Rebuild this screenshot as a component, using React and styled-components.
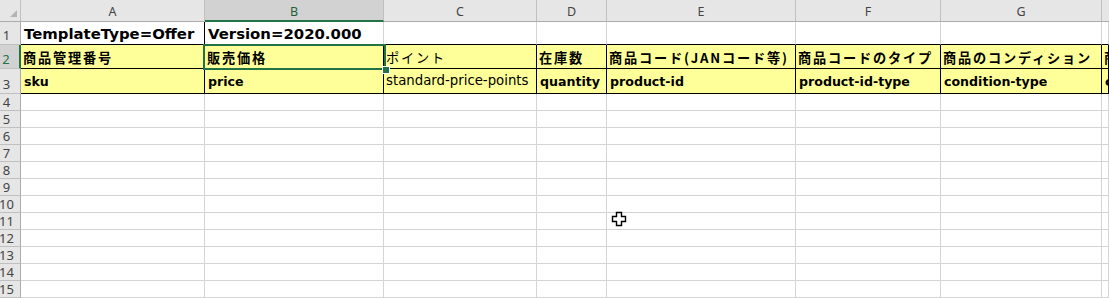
import React from "react";
import styled, { createGlobalStyle, css } from "styled-components";

const GlobalStyle = createGlobalStyle`
  html, body { margin: 0; padding: 0; background: #ffffff; overflow: hidden; }
  body { font-family: "DejaVu Sans", sans-serif; }
`;

const COLS = [
  { key: "A", w: 184 },
  { key: "B", w: 179 },
  { key: "C", w: 153 },
  { key: "D", w: 70 },
  { key: "E", w: 189 },
  { key: "F", w: 145 },
  { key: "G", w: 161 },
  { key: "H", w: 7, partial: true },
];
const ROW_H = [23, 24, 25, ...Array(12).fill(17)];

const GREEN = "#217346";
const HEAD_BG = "#e6e6e6";
const HEAD_SEL = "#d2d2d2";
const HEAD_LINE = "#c0c0c0";
const GRID = "#d4d4d4";
const YELLOW = "#ffff99";

const Sheet = styled.div`
  display: grid;
  grid-template-columns: 21px ${COLS.map((c) => c.w + "px").join(" ")};
  grid-template-rows: 22px ${ROW_H.map((h) => h + "px").join(" ")};
  width: 1109px;
  position: relative;
  overflow: hidden;
`;

const Corner = styled.div`
  box-sizing: border-box;
  background: ${HEAD_BG};
  border-right: 1px solid ${HEAD_LINE};
  border-bottom: 1px solid #ababab;
  display: flex;
  align-items: flex-end;
  justify-content: flex-end;
  padding: 0 3px 4px 0;
`;

const CornerMark = styled.div`
  width: 0;
  height: 0;
  border-left: 7px solid transparent;
  border-bottom: 7px solid #b4b4b4;
`;

const ColHeader = styled.div`
  box-sizing: border-box;
  background: ${(p) => (p.$selected ? HEAD_SEL : HEAD_BG)};
  border-right: 1px solid ${HEAD_LINE};
  border-bottom: ${(p) => (p.$selected ? `2px solid ${GREEN}` : "1px solid #ababab")};
  display: flex;
  align-items: flex-end;
  justify-content: ${(p) => (p.$partial ? "flex-start" : "center")};
  padding-bottom: ${(p) => (p.$selected ? "2px" : "3px")};
  padding-left: ${(p) => (p.$partial ? "40px" : "0")};
  font-family: "Noto Sans", "DejaVu Sans", sans-serif;
  font-size: 12.5px;
  line-height: 1;
  color: ${(p) => (p.$selected ? "#1f5f3b" : "#444444")};
  overflow: hidden;
`;

const RowHeader = styled.div`
  box-sizing: border-box;
  background: ${(p) => (p.$selected ? HEAD_SEL : HEAD_BG)};
  border-right: ${(p) => (p.$selected ? `2px solid ${GREEN}` : "1px solid #ababab")};
  border-bottom: 1px solid ${HEAD_LINE};
  display: flex;
  align-items: flex-end;
  justify-content: center;
  padding: 0 7px ${(p) => (p.$tall ? "2px" : "1px")} 0;
  font-family: "Noto Sans", "DejaVu Sans", sans-serif;
  font-size: 13px;
  line-height: 1;
  color: ${(p) => (p.$selected ? GREEN : "#444444")};
  white-space: nowrap;
`;

const Cell = styled.div`
  box-sizing: border-box;
  position: relative;
  background: ${(p) => (p.$fill ? YELLOW : "#ffffff")};
  border-right: 1px solid ${(p) => (p.$darkRight ? "#000000" : GRID)};
  border-bottom: 1px solid ${(p) => (p.$darkBottom ? "#000000" : GRID)};
  display: flex;
  align-items: flex-end;
  padding: 0 0 ${(p) => p.$pb || 0}px ${(p) => p.$pl || 3}px;
  white-space: nowrap;
  overflow: ${(p) => (p.$clip ? "hidden" : "visible")};
  color: #000000;
  line-height: 1.1;
  ${(p) =>
    p.$kind === "title" &&
    css`
      font-family: "DejaVu Sans", sans-serif;
      font-weight: 700;
      font-size: 14.9px;
    `}
  ${(p) =>
    p.$kind === "jp" &&
    css`
      font-family: "Noto Sans CJK JP", "Noto Sans", sans-serif;
      font-weight: ${p.$bold ? 700 : 400};
      font-size: 13.2px;
      letter-spacing: 1.8px;
    `}
  ${(p) =>
    p.$kind === "code" &&
    css`
      font-family: "DejaVu Sans", sans-serif;
      font-weight: ${p.$bold ? 700 : 400};
      font-size: ${p.$bold ? "12.6px" : "13.3px"};
    `}
`;

const Selection = styled.div`
  position: absolute;
  left: -2px;
  right: -3px;
  top: -1px;
  bottom: -2px;
  border: 2px solid ${GREEN};
  pointer-events: none;
  z-index: 2;
`;

const FillHandle = styled.div`
  position: absolute;
  right: -5px;
  bottom: -5px;
  width: 6px;
  height: 6px;
  background: ${GREEN};
  box-shadow: 0 0 0 1px #ffffff;
`;

const Pointer = styled.svg`
  position: absolute;
  left: 611px;
  top: 211px;
  z-index: 3;
`;

const row1 = ["TemplateType=Offer", "Version=2020.000"];
const row2 = [
  "商品管理番号",
  "販売価格",
  "ポイント",
  "在庫数",
  "商品コード(JANコード等)",
  "商品コードのタイプ",
  "商品のコンディション",
  "商品のコンディション説明",
];
const row3 = [
  "sku",
  "price",
  "standard-price-points",
  "quantity",
  "product-id",
  "product-id-type",
  "condition-type",
  "condition-note",
];

export default function App() {
  const cells = [];
  cells.push(
    <Corner key="corner">
      <CornerMark />
    </Corner>
  );
  COLS.forEach((c) =>
    cells.push(
      <ColHeader key={"h" + c.key} $selected={c.key === "B"} $partial={c.partial}>
        {c.key}
      </ColHeader>
    )
  );
  ROW_H.forEach((h, ri) => {
    const r = ri + 1;
    cells.push(
      <RowHeader key={"r" + r} $selected={r === 2} $tall={r <= 3}>
        {r}
      </RowHeader>
    );
    COLS.forEach((c, ci) => {
      const key = c.key + r;
      const last = !!c.partial;
      if (r === 1) {
        cells.push(
          <Cell
            key={key}
            $kind="title"
            $darkBottom
            $darkRight={ci === 0}
            $pb={2}
            $clip={last}
          >
            {row1[ci] || ""}
          </Cell>
        );
      } else if (r === 2) {
        cells.push(
          <Cell
            key={key}
            $fill
            $kind="jp"
            $bold={ci !== 2}
            $darkRight
            $darkBottom
            $pb={2}
            $pl={2}
            $clip={last}
          >
            {row2[ci]}
            {c.key === "B" && (
              <Selection>
                <FillHandle />
              </Selection>
            )}
          </Cell>
        );
      } else if (r === 3) {
        cells.push(
          <Cell
            key={key}
            $fill
            $kind="code"
            $bold={ci !== 2}
            $darkRight
            $darkBottom
            $pb={4}
            $pl={ci === 2 ? 2 : 3}
            $clip={last}
          >
            {row3[ci]}
          </Cell>
        );
      } else {
        cells.push(<Cell key={key} />);
      }
    });
  });

  return (
    <>
      <GlobalStyle />
      <Sheet>
        {cells}
        <Pointer width="16" height="16" viewBox="0 0 16 16">
          <path
            d="M5.5 1.5h5v4h4v5h-4v4h-5v-4h-4v-5h4z"
            fill="#ffffff"
            stroke="#000000"
            strokeWidth="1.4"
            strokeLinejoin="miter"
          />
        </Pointer>
      </Sheet>
    </>
  );
}
